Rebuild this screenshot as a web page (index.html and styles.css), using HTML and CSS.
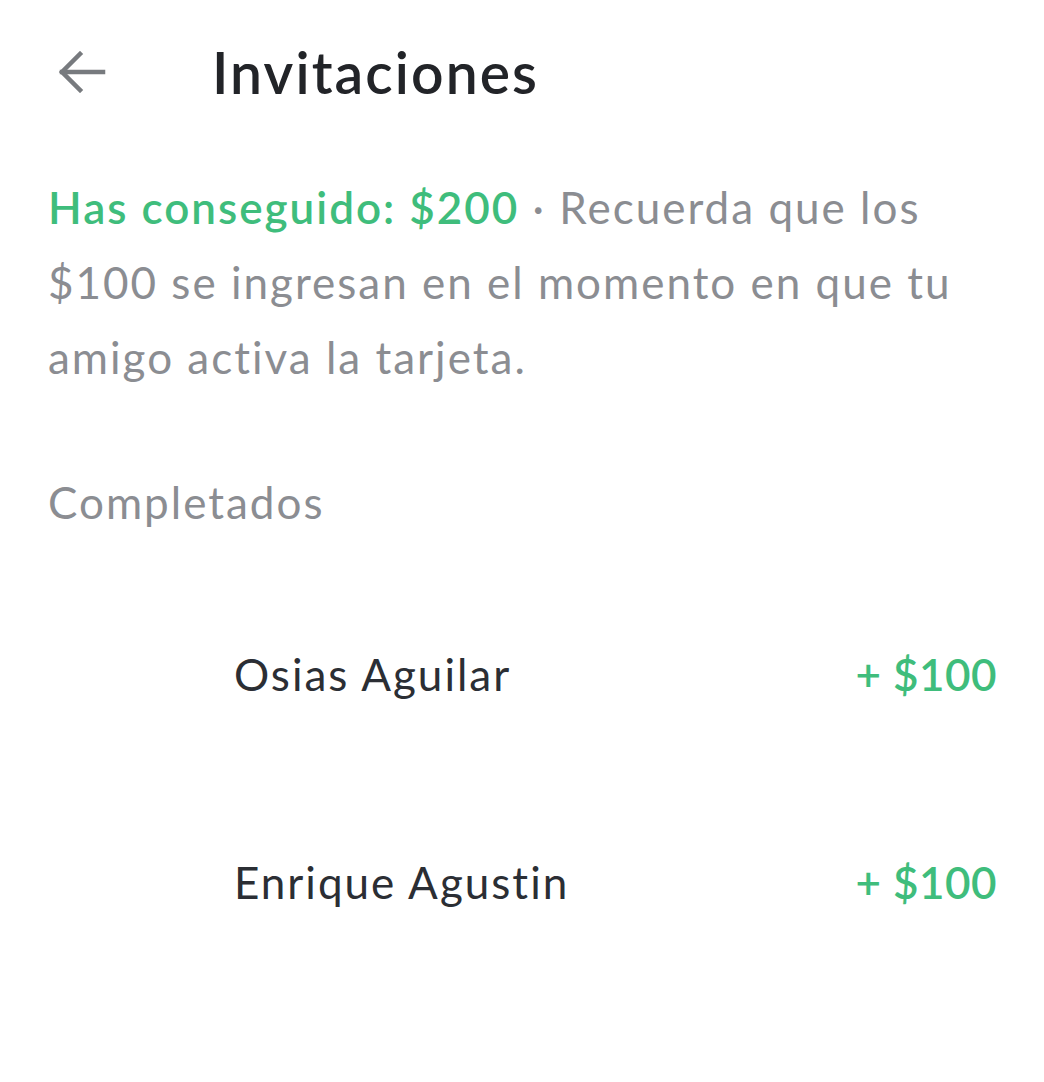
FILE: index.html
```html
<!DOCTYPE html>
<html lang="es">
<head>
<meta charset="utf-8">
<title>Invitaciones</title>
<link rel="stylesheet" href="styles.css">
</head>
<body>
<div class="screen">
  <header class="topbar">
    <button class="back" aria-label="Volver">
      <svg width="50" height="42" viewBox="0 0 50 42" fill="none" stroke="#777a7e" stroke-width="4.5" stroke-linecap="square" stroke-linejoin="miter">
        <path d="M47 21H6"/>
        <path d="M24 3L6 21L24 39"/>
      </svg>
    </button>
    <h1 class="title">Invitaciones</h1>
  </header>
  <p class="summary"><span class="earned">Has conseguido: $200</span> · Recuerda que los $100 se ingresan en el momento en que tu amigo activa la tarjeta.</p>
  <h2 class="section">Completados</h2>
  <ul class="list">
    <li class="row"><span class="name">Osias Aguilar</span><span class="amount">+ $100</span></li>
    <li class="row"><span class="name">Enrique Agustin</span><span class="amount">+ $100</span></li>
  </ul>
</div>
</body>
</html>
```
FILE: styles.css
```css
html, body {
  margin: 0;
  padding: 0;
  background: #ffffff;
}
body {
  font-family: Lato, "Noto Sans", sans-serif;
  color: #2b2e34;
}
.screen {
  width: 1044px;
  min-height: 1082px;
  box-sizing: border-box;
  padding: 0 47px 0 48px;
}
.topbar {
  display: flex;
  align-items: center;
  height: 148px;
  box-sizing: border-box;
}
.back {
  border: 0;
  background: none;
  padding: 0;
  margin: 0 0 0 8px;
  width: 50px;
  height: 42px;
  display: flex;
  align-items: center;
  justify-content: center;
  position: relative;
  top: -2px;
}
.title {
  margin: 0 0 0 106px;
  font-size: 57px;
  font-weight: 600;
  color: #222428;
  letter-spacing: 2.1px;
  position: relative;
  top: -2px;
}
.summary {
  margin: 22px 0 0 0;
  width: 970px;
  font-size: 44px;
  line-height: 75px;
  color: #8b8d92;
  letter-spacing: 2px;
}
.earned {
  color: #3fbd7c;
  font-weight: 600;
  letter-spacing: 2px;
}
.section {
  margin: 77px 0 0 0;
  font-size: 44px;
  line-height: 60px;
  font-weight: 400;
  color: #8b8d92;
  letter-spacing: 2px;
}
.list {
  list-style: none;
  margin: 38px 0 0 0;
  padding: 0;
}
.row {
  display: flex;
  justify-content: space-between;
  align-items: center;
  height: 208px;
  padding-left: 186px;
}
.name {
  font-size: 44px;
  color: #2b2e34;
  letter-spacing: 2px;
}
.amount {
  font-size: 44px;
  font-weight: 600;
  color: #3fbd7c;
  letter-spacing: 0.5px;
}
```
